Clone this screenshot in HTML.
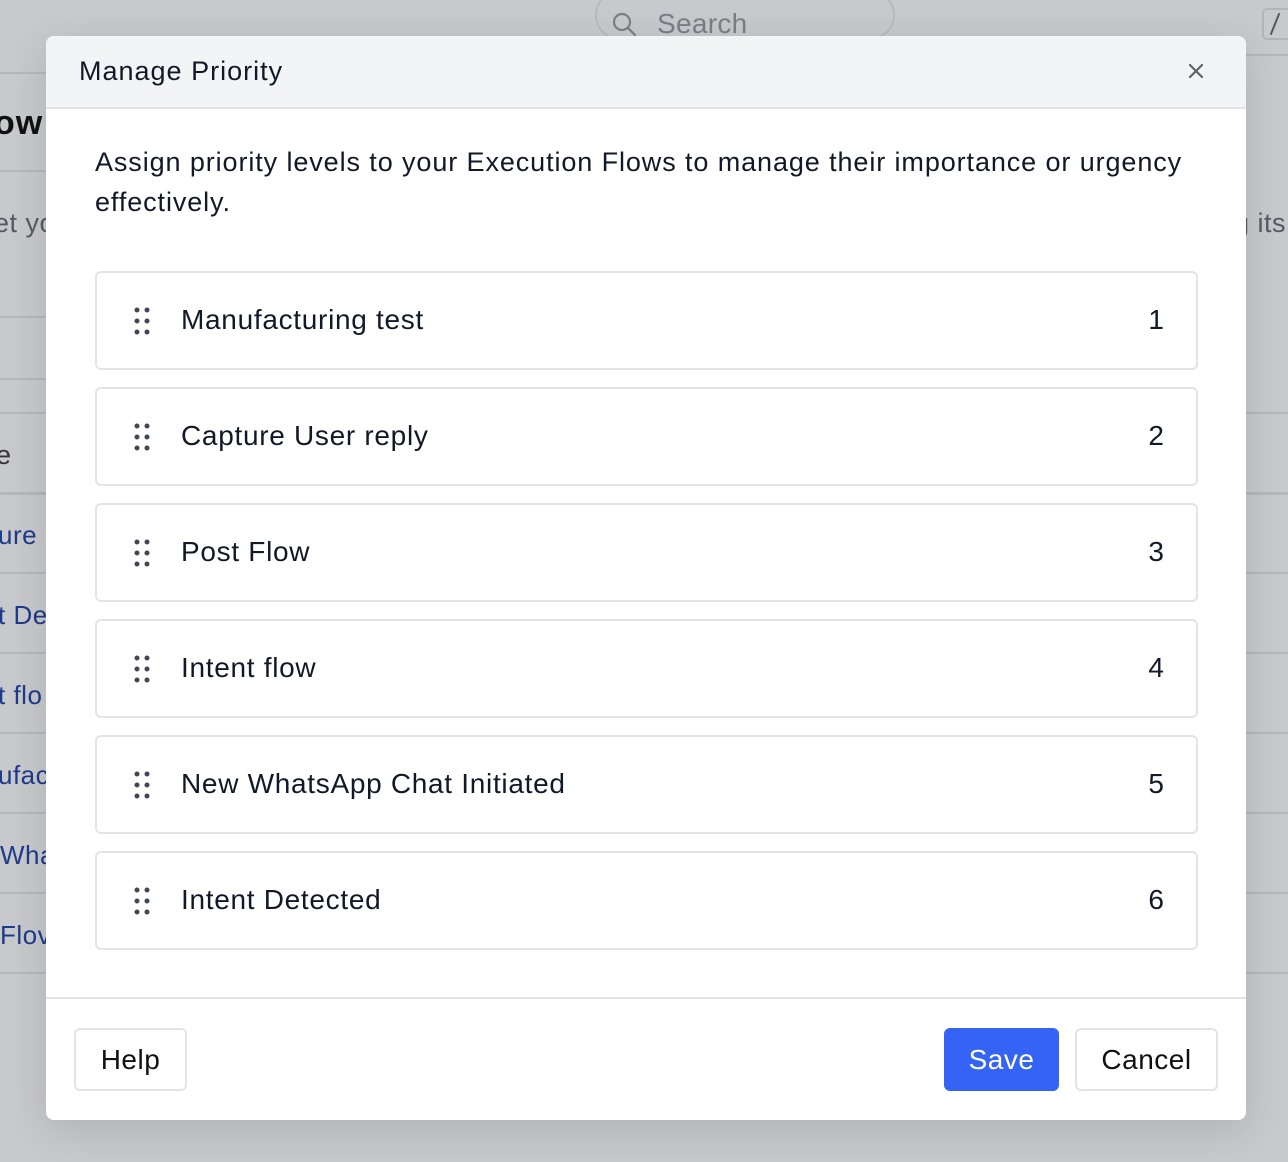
<!DOCTYPE html>
<html><head><meta charset="utf-8"><style>
*{box-sizing:border-box;margin:0;padding:0}
html,body{width:1288px;height:1162px;overflow:hidden}
body{background:#c8c9cc;font-family:"Liberation Sans",Arial,sans-serif;position:relative;color:#111}
div{white-space:nowrap}
.bl{position:absolute;height:2px;background:#b6b7bb}
.bt{position:absolute;font-size:26px;color:#1e3a8a;white-space:nowrap;overflow:hidden;letter-spacing:.5px}
.modal{position:absolute;left:46px;top:36px;width:1200px;height:1084px;background:#fff;border-radius:8px;overflow:hidden;box-shadow:0 10px 40px rgba(0,0,0,.12)}
.hd{height:73px;background:#f3f4f6;border-bottom:2px solid #e3e4e8;position:relative}
.hd h1{position:absolute;left:33px;top:20px;font-size:27px;font-weight:normal;color:#111827;letter-spacing:1px}
.x{position:absolute;left:1143px;top:28px}
.modal .desc{position:absolute;left:49px;top:106px;width:1110px;font-size:27px;line-height:40px;color:#111827;letter-spacing:.9px;white-space:normal}
.item{position:absolute;left:49px;width:1103px;height:99px;border:2px solid #e3e4e8;border-radius:6px}
.item .d{position:absolute;left:36px;top:34px}
.item .t{position:absolute;left:84px;top:31px;font-size:28px;color:#111827;letter-spacing:.7px}
.item .n{position:absolute;right:32px;top:31px;font-size:28px;color:#111827}
.ft{position:absolute;left:0;top:961px;width:100%;border-top:2px solid #e3e4e8}
.btn{position:absolute;top:992px;height:63px;border:2px solid #e3e4e8;border-radius:6px;font-size:28px;text-align:center;line-height:59px;color:#111;background:#fff;letter-spacing:.5px}
</style></head><body>
<div style="position:absolute;left:595px;top:-10px;width:300px;height:50px;border:2px solid #b9babe;border-radius:25px"></div>
<svg style="position:absolute;left:612px;top:12px" width="26" height="26" viewBox="0 0 26 26"><circle cx="10" cy="10" r="8" fill="none" stroke="#7b7e85" stroke-width="2.2"/><path d="M16 16l7 7" stroke="#7b7e85" stroke-width="2.2" stroke-linecap="round"/></svg>
<div style="position:absolute;left:657px;top:8px;font-size:28px;color:#7b7e85;letter-spacing:.3px">Search</div>
<div style="position:absolute;left:1262px;top:8px;width:40px;height:32px;border:2px solid #b3b4b8;border-radius:5px"></div>
<svg style="position:absolute;left:1268px;top:12px" width="14" height="24"><path d="M11 2L3 22" stroke="#55585f" stroke-width="2" stroke-linecap="round"/></svg>
<div class="bl" style="left:0;width:60px;top:72px"></div>
<div class="bl" style="left:1240px;width:60px;top:54px"></div>
<div style="position:absolute;left:-6px;top:104px;font-size:34px;font-weight:bold;color:#111;letter-spacing:1px">ow</div>
<div class="bl" style="left:0;width:60px;top:170px"></div>
<div style="position:absolute;left:-6px;top:208px;font-size:27px;color:#555a63;letter-spacing:.5px">et yo</div>
<div style="position:absolute;left:1234px;top:208px;font-size:27px;color:#555a63;letter-spacing:.5px">g its</div>
<div class="bl" style="left:0;width:60px;top:316px"></div>
<div class="bl" style="left:0;width:60px;top:378px"></div>
<div class="bl" style="left:0;width:1288px;top:412px"></div>
<div style="position:absolute;left:-4px;top:440px;font-size:27px;color:#333">e</div>
<div class="bl" style="left:0;width:1288px;top:492px;height:3px"></div>
<div class="bt" style="left:-2px;top:520px">ure U</div>
<div class="bl" style="left:0;width:1288px;top:572px"></div>
<div class="bt" style="left:-2px;top:600px">t De</div>
<div class="bl" style="left:0;width:1288px;top:652px"></div>
<div class="bt" style="left:-2px;top:680px">t flo</div>
<div class="bl" style="left:0;width:1288px;top:732px"></div>
<div class="bt" style="left:-2px;top:760px">ufac</div>
<div class="bl" style="left:0;width:1288px;top:812px"></div>
<div class="bt" style="left:0;top:840px">Wha</div>
<div class="bl" style="left:0;width:1288px;top:892px"></div>
<div class="bt" style="left:0;top:920px">Flov</div>
<div class="bl" style="left:0;width:1288px;top:972px"></div>

<div class="modal">
<div class="hd"><h1>Manage Priority</h1>
<svg class="x" width="14" height="14" viewBox="0 0 14 14"><path d="M1 1L13 13M13 1L1 13" stroke="#5f636b" stroke-width="2.2" stroke-linecap="round"/></svg></div>
<div class="desc">Assign priority levels to your Execution Flows to manage their importance or urgency effectively.</div>

<div class="item" style="top:235px"><svg class="d" width="20" height="28"><g fill="#3f4654"><circle cx="4" cy="3" r="2.5"/><circle cx="14" cy="3" r="2.5"/><circle cx="4" cy="14" r="2.5"/><circle cx="14" cy="14" r="2.5"/><circle cx="4" cy="25" r="2.5"/><circle cx="14" cy="25" r="2.5"/></g></svg><div class="t">Manufacturing test</div><div class="n">1</div></div>
<div class="item" style="top:351px"><svg class="d" width="20" height="28"><g fill="#3f4654"><circle cx="4" cy="3" r="2.5"/><circle cx="14" cy="3" r="2.5"/><circle cx="4" cy="14" r="2.5"/><circle cx="14" cy="14" r="2.5"/><circle cx="4" cy="25" r="2.5"/><circle cx="14" cy="25" r="2.5"/></g></svg><div class="t">Capture User reply</div><div class="n">2</div></div>
<div class="item" style="top:467px"><svg class="d" width="20" height="28"><g fill="#3f4654"><circle cx="4" cy="3" r="2.5"/><circle cx="14" cy="3" r="2.5"/><circle cx="4" cy="14" r="2.5"/><circle cx="14" cy="14" r="2.5"/><circle cx="4" cy="25" r="2.5"/><circle cx="14" cy="25" r="2.5"/></g></svg><div class="t">Post Flow</div><div class="n">3</div></div>
<div class="item" style="top:583px"><svg class="d" width="20" height="28"><g fill="#3f4654"><circle cx="4" cy="3" r="2.5"/><circle cx="14" cy="3" r="2.5"/><circle cx="4" cy="14" r="2.5"/><circle cx="14" cy="14" r="2.5"/><circle cx="4" cy="25" r="2.5"/><circle cx="14" cy="25" r="2.5"/></g></svg><div class="t">Intent flow</div><div class="n">4</div></div>
<div class="item" style="top:699px"><svg class="d" width="20" height="28"><g fill="#3f4654"><circle cx="4" cy="3" r="2.5"/><circle cx="14" cy="3" r="2.5"/><circle cx="4" cy="14" r="2.5"/><circle cx="14" cy="14" r="2.5"/><circle cx="4" cy="25" r="2.5"/><circle cx="14" cy="25" r="2.5"/></g></svg><div class="t">New WhatsApp Chat Initiated</div><div class="n">5</div></div>
<div class="item" style="top:815px"><svg class="d" width="20" height="28"><g fill="#3f4654"><circle cx="4" cy="3" r="2.5"/><circle cx="14" cy="3" r="2.5"/><circle cx="4" cy="14" r="2.5"/><circle cx="14" cy="14" r="2.5"/><circle cx="4" cy="25" r="2.5"/><circle cx="14" cy="25" r="2.5"/></g></svg><div class="t">Intent Detected</div><div class="n">6</div></div>

<div class="ft"></div>
<div class="btn" style="left:28px;width:113px">Help</div>
<div class="btn" style="left:898px;width:115px;background:#3563f5;border-color:#3563f5;color:#fff">Save</div>
<div class="btn" style="left:1029px;width:143px">Cancel</div>
</div>
</body></html>
